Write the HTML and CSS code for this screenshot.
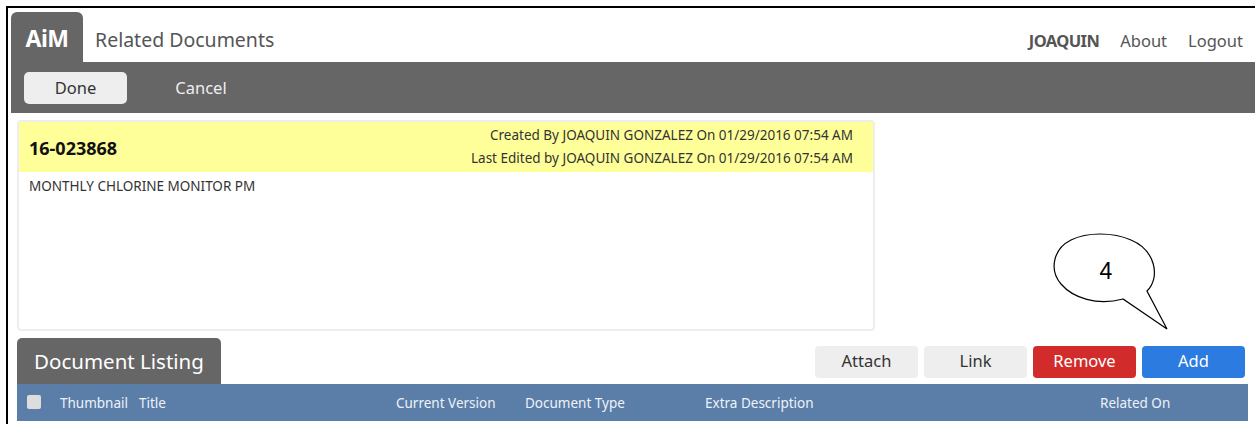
FILE: index.html
```html
<!DOCTYPE html>
<html>
<head>
<meta charset="utf-8">
<title>Related Documents</title>
<link rel="stylesheet" href="styles.css">
</head>
<body>
<div class="frame">
  <header class="topbar">
    <div class="brand">AiM</div>
    <div class="page-title">Related Documents</div>
    <nav class="user-nav">
      <span class="user">JOAQUIN</span>
      <span class="nav-link">About</span>
      <span class="nav-link">Logout</span>
    </nav>
  </header>
  <div class="toolbar">
    <button class="tb-btn tb-primary">Done</button>
    <button class="tb-btn tb-plain">Cancel</button>
  </div>
  <main class="content">
    <section class="record">
      <div class="record-head">
        <div class="record-id">16-023868</div>
        <div class="record-meta">
          <div>Created By JOAQUIN GONZALEZ On 01/29/2016 07:54 AM</div>
          <div>Last Edited by JOAQUIN GONZALEZ On 01/29/2016 07:54 AM</div>
        </div>
      </div>
      <div class="record-desc">MONTHLY CHLORINE MONITOR PM</div>
    </section>
    <section class="listing">
      <div class="listing-bar">
        <div class="listing-tab">Document Listing</div>
        <div class="actions">
          <button class="act act-grey">Attach</button>
          <button class="act act-grey">Link</button>
          <button class="act act-red">Remove</button>
          <button class="act act-blue">Add</button>
          <svg class="callout" width="120" height="104" viewBox="0 0 120 104">
            <path d="M96 59 C110 45 104 18 80 8 C62 0 36 0 20 8 C2 17 -2 38 10 52 C22 66 46 74 72 67 L116 97 Z" fill="#fff" stroke="#000" stroke-width="1.2" stroke-linejoin="miter"/>
            <text x="55" y="47" text-anchor="middle" class="callout-num">4</text>
          </svg>
        </div>
      </div>
      <div class="grid-head">
        <span class="chk"></span>
        <span class="col c-thumb">Thumbnail</span>
        <span class="col c-title">Title</span>
        <span class="col c-ver">Current Version</span>
        <span class="col c-type">Document Type</span>
        <span class="col c-extra">Extra Description</span>
        <span class="col c-rel">Related On</span>
      </div>
    </section>
  </main>
</div>
</body>
</html>
```

FILE: styles.css
```css
* { box-sizing: border-box; }

html, body {
  margin: 0;
  padding: 0;
  background: #fff;
}

body {
  padding: 6px 0 0 6px;
  font-family: "Noto Sans", "Open Sans", sans-serif;
  color: #333;
  height: 424px;
  overflow: hidden;
}

.frame {
  border-top: 2px solid #000;
  border-left: 2px solid #000;
  padding: 4px 0 0 3px;
  height: 430px;
}

/* top bar */
.topbar {
  display: flex;
  align-items: stretch;
  height: 50px;
}

.brand {
  width: 72px;
  background: #666;
  color: #fff;
  font-weight: bold;
  font-size: 23px;
  border-radius: 6px 6px 0 0;
  display: flex;
  align-items: center;
  justify-content: center;
  padding-top: 2px;
  letter-spacing: -0.5px;
}

.page-title {
  margin-left: 12px;
  font-size: 19.5px;
  color: #555;
  display: flex;
  align-items: center;
  padding-top: 4px;
}

.user-nav {
  margin-left: auto;
  display: flex;
  align-items: center;
  gap: 21px;
  padding: 6px 12px 0 0;
  font-size: 16.5px;
  color: #555;
}

.user-nav .user {
  font-weight: bold;
  letter-spacing: -0.6px;
}

/* toolbar */
.toolbar {
  height: 51px;
  background: #666;
  display: flex;
  align-items: center;
  padding-left: 13px;
  gap: 22px;
}

.tb-btn {
  font-family: inherit;
  font-size: 16.5px;
  border: 0;
  height: 32px;
  width: 103px;
  border-radius: 5px;
  padding: 0;
}

.tb-primary {
  background: #eee;
  color: #333;
}

.tb-plain {
  background: transparent;
  color: #eee;
  width: 104px;
}

/* content */
.content {
  padding: 7px 7px 0 6px;
}

.record {
  width: 858px;
  height: 211px;
  border: 2px solid #eee;
  border-radius: 4px;
  background: #fff;
}

.record-head {
  background: #ffff99;
  height: 50px;
  display: flex;
  align-items: center;
  justify-content: space-between;
  padding: 0 20px 0 10px;
}

.record-id {
  font-weight: bold;
  font-size: 18px;
  color: #111;
  padding-top: 1px;
}

.record-meta {
  text-align: right;
  font-size: 13.5px;
  line-height: 23px;
  color: #333;
  padding-bottom: 1px;
}

.record-desc {
  padding: 5px 10px;
  font-size: 13.5px;
  color: #333;
}

/* listing */
.listing {
  margin-top: 7px;
}

.listing-bar {
  display: flex;
  align-items: flex-end;
  justify-content: space-between;
  height: 46px;
}

.listing-tab {
  width: 204px;
  height: 46px;
  background: #666;
  color: #fff;
  font-size: 20.5px;
  border-radius: 5px 5px 0 0;
  display: flex;
  align-items: center;
  justify-content: center;
  padding-top: 0;
}

.actions {
  position: relative;
  display: flex;
  gap: 6px;
  margin-bottom: 6px;
  margin-right: 3px;
}

.act {
  font-family: inherit;
  font-size: 16.5px;
  width: 103px;
  height: 32px;
  border: 0;
  border-radius: 4px;
  padding: 0 0 3px;
}

.act-grey { background: #eee; color: #333; }
.act-red { background: #d12b2b; color: #fff; }
.act-blue { background: #2b7be0; color: #fff; }

/* numbered speech bubble over the action buttons */
.callout {
  position: absolute;
  right: 74px;
  bottom: 42px;
}

.callout-num {
  font-family: "Liberation Sans", sans-serif;
  font-size: 23px;
  fill: #000;
}

.grid-head {
  width: 1231px;
  height: 37px;
  background: #5a7ea8;
  display: flex;
  align-items: center;
  color: #eef2f8;
  font-size: 13.5px;
  position: relative;
}

.chk {
  position: absolute;
  left: 10px;
  top: 11px;
  width: 14px;
  height: 14px;
  background: #ddd;
  border-radius: 2px;
}

.col {
  position: absolute;
  top: 10px;
}

.c-thumb { left: 43px; }
.c-title { left: 122px; }
.c-ver { left: 379px; }
.c-type { left: 508px; }
.c-extra { left: 688px; }
.c-rel { left: 1083px; }
```
